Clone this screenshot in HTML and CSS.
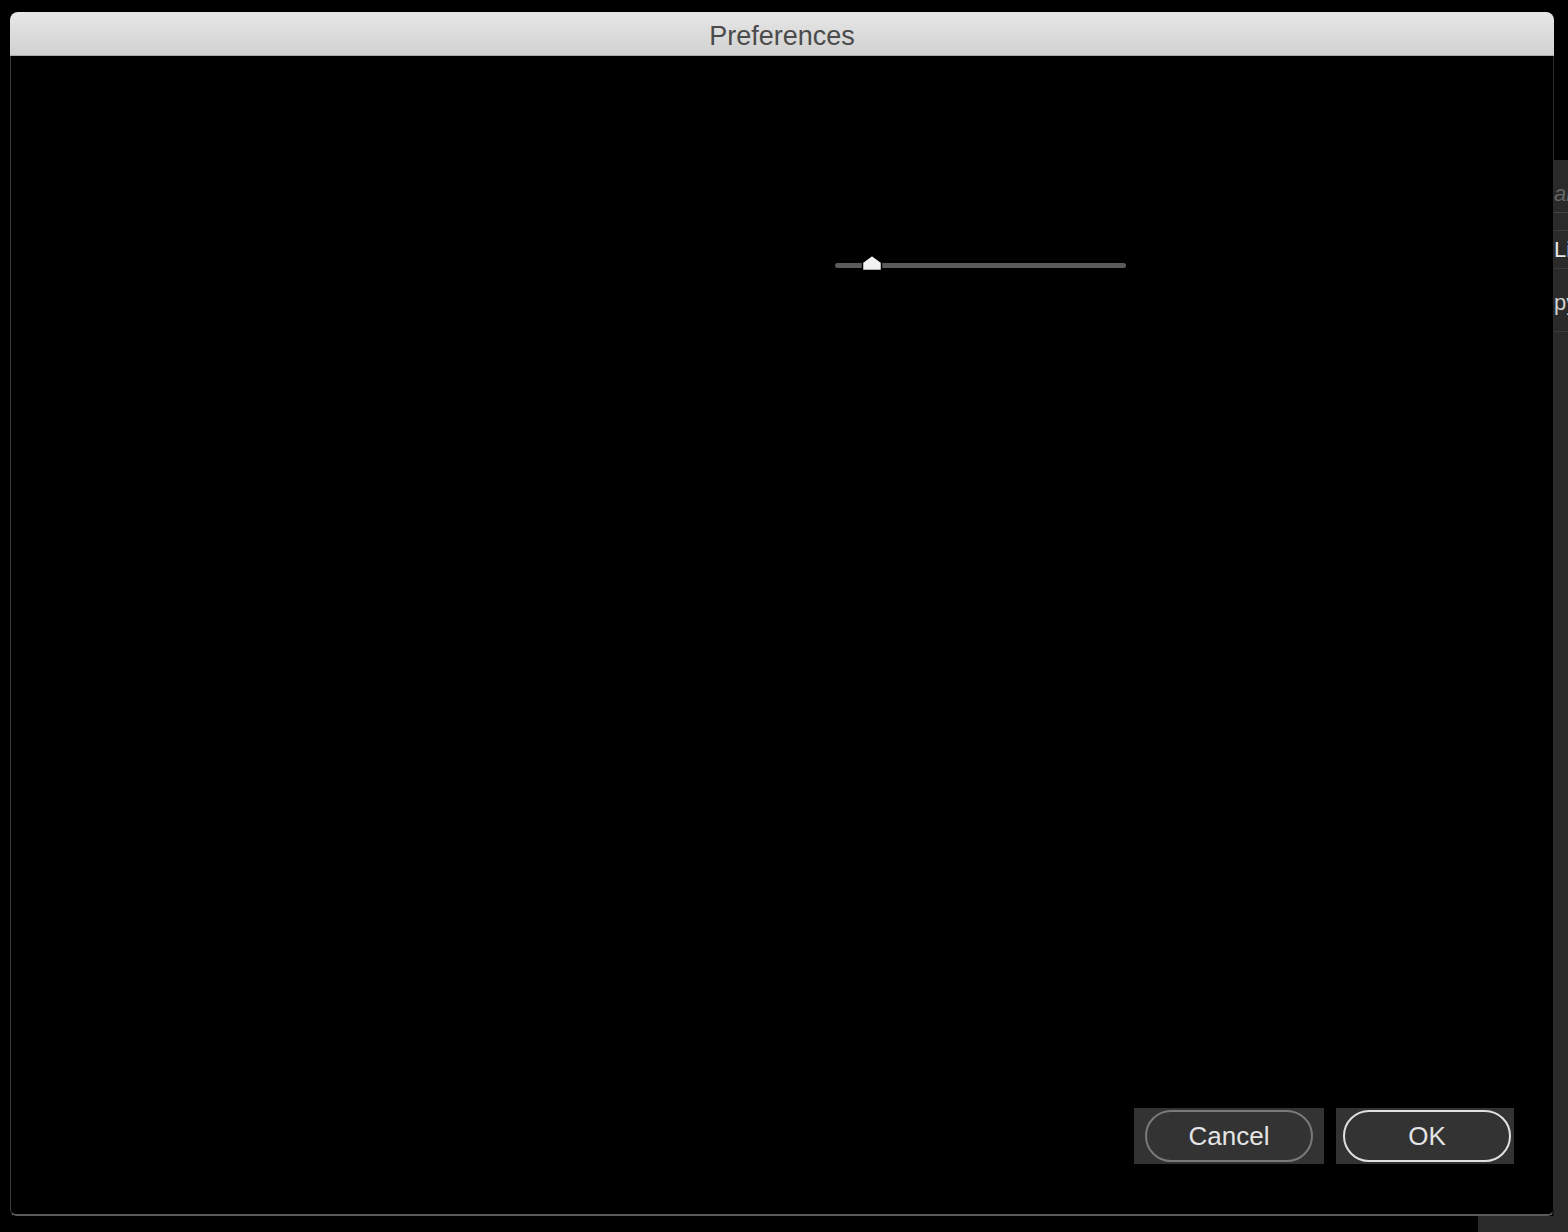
FILE: index.html
```html
<!doctype html>
<html>
  <head>
    <meta charset="utf-8">
    <title>Preferences</title>
    <link rel="stylesheet" href="styles.css">
  </head>
  <body>
    <div class="desk">
      <!-- app window behind the dialog -->
      <div class="backapp">
        <div class="brow hint"><span>ar</span></div>
        <div class="brow gap"></div>
        <div class="brow item"><span>Li</span></div>
        <div class="brow item tall"><span>py</span></div>
      </div>
      <div class="backfoot"></div>

      <div class="dialog">
        <div class="titlebar">Preferences</div>
        <div class="content">
          <div class="sliderrow">
            <div class="slider">
              <div class="track"></div>
              <svg class="thumb" width="22" height="18" viewBox="0 0 22 18">
                <path d="M1.5 16.5 V8.5 L11 1.5 L20.5 8.5 V16.5 Z" fill="#f2f2f2" stroke="#000" stroke-width="1.5"/>
              </svg>
            </div>
          </div>
          <div class="buttons">
            <div class="btnbox cancel"><button class="pill">Cancel</button></div>
            <div class="btnbox ok"><button class="pill">OK</button></div>
          </div>
        </div>
      </div>
    </div>
  </body>
</html>
```

FILE: styles.css
```css
html, body { margin:0; padding:0; background:#000; }
body { font-family:"Liberation Sans", Arial, sans-serif; }
.desk { position:relative; width:1568px; height:1232px; overflow:hidden; background:#000; }

.backapp {
  position:absolute; left:1553px; top:160px; width:200px; height:1100px;
  background:#2a2a2a; border-left:1px solid #1a1a1a;
}
.brow { border-bottom:1px solid #3c3c3c; display:flex; align-items:center; font-size:22px; }
.brow.hint { height:36px; padding-top:16px; color:#666; font-style:italic; border-bottom-color:#444; }
.brow.gap { height:17px; }
.brow.item { height:37px; color:#e6e6e6; }
.brow.tall { height:56px; padding-top:6px; color:#cfcfcf; }
.backfoot { position:absolute; left:1478px; top:1216px; width:120px; height:30px; background:#2a2a2a; }

.dialog {
  position:absolute; left:10px; top:12px; width:1544px; height:1204px;
  display:flex; flex-direction:column;
  border-radius:8px 8px 6px 6px; overflow:hidden; background:#000;
}
.titlebar {
  height:44px; flex:none;
  background:linear-gradient(#e7e7e7, #d1d1d1);
  border-bottom:1px solid #ababab;
  color:#4b4b4b; font-size:27px; font-family:"Liberation Sans", Arial, sans-serif;
  display:flex; align-items:center; justify-content:center; padding-top:5px; box-sizing:border-box;
}
.content {
  flex:1; position:relative;
  border-left:1px solid #3a3a3a; border-right:1px solid #2a2a2a; border-bottom:2px solid #5a5a5a;
  border-radius:0 0 6px 6px;
  display:flex; flex-direction:column;
}
.sliderrow { padding:199px 0 0 824px; height:30px; }
.slider { position:relative; width:291px; height:20px; }
.track { position:absolute; left:0; right:0; top:8px; height:5px; border-radius:3px; background:#5b5b5b; }
.thumb { position:absolute; left:26px; top:-1px; }

.buttons { margin-top:auto; display:flex; justify-content:flex-end; gap:12px; padding:0 39px 50px 0; }
.btnbox { background:#333; height:56px; display:flex; align-items:center; justify-content:center; }
.btnbox.cancel { width:190px; }
.btnbox.ok { width:178px; justify-content:flex-end; padding-right:3px; box-sizing:border-box; }
.pill {
  height:52px; width:168px; border-radius:26px; background:transparent;
  font-family:"Liberation Sans", Arial, sans-serif; font-size:26px; color:#e4e4e4;
  cursor:pointer; padding:0;
}
.cancel .pill { border:2px solid #7a7a7a; }
.ok .pill { border:2px solid #e0e0e0; }
```
